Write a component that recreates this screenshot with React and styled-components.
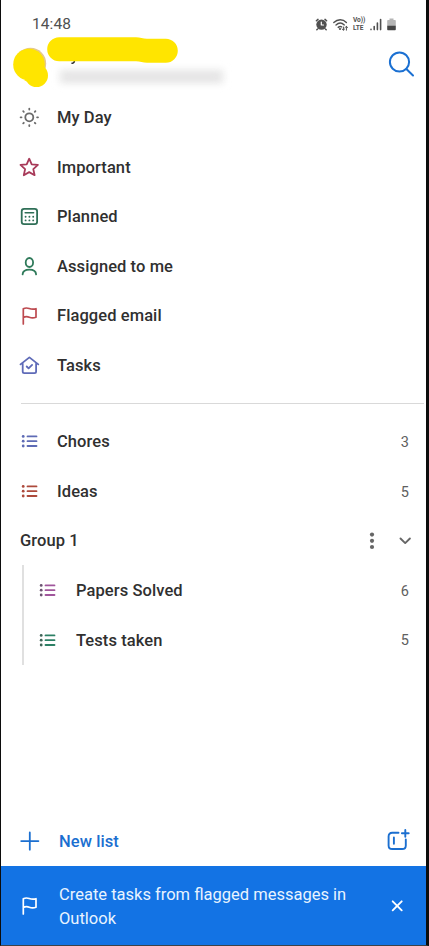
import React, { useState } from 'react';
import styled, { createGlobalStyle } from 'styled-components';

const GlobalStyle = createGlobalStyle`
  * { box-sizing: border-box; }
  body {
    margin: 0;
    background: #ffffff;
    font-family: Roboto, 'Liberation Sans', sans-serif;
  }
  p { margin: 0; }
`;

const smartLists = [
  { id: 'myday', name: 'My Day', color: '#6b6b6b' },
  { id: 'important', name: 'Important', color: '#a83a59' },
  { id: 'planned', name: 'Planned', color: '#2f6f57' },
  { id: 'assigned', name: 'Assigned to me', color: '#2f7a5a' },
  { id: 'flagged', name: 'Flagged email', color: '#bd4a50' },
  { id: 'tasks', name: 'Tasks', color: '#5f6bb8' },
];

const userLists = [
  { id: 1, name: 'Chores', color: '#5e6bb5', count: 3 },
  { id: 2, name: 'Ideas', color: '#ad4a3c', count: 5 },
];

const groupLists = [
  { id: 3, name: 'Papers Solved', color: '#a0569b', dot: '#6b5370', count: 6 },
  { id: 4, name: 'Tests taken', color: '#2d8065', dot: '#3f6457', count: 5 },
];

const Screen = styled.div`
  display: flex;
  flex-direction: column;
  width: 429px;
  height: 946px;
  background: #ffffff;
  border: solid #0c0c0c;
  border-width: 0 3px 1px 1px;
  border-bottom-color: #3d4248;
  overflow: hidden;
`;

const StatusBar = styled.div`
  display: flex;
  align-items: center;
  justify-content: space-between;
  height: 37px;
  padding: 11px 30px 0 31px;
  color: #505050;
`;

const Clock = styled.p`
  font-size: 15.5px;
  line-height: 26px;
  letter-spacing: 0.1px;
`;

const StatusIcons = styled.div`
  display: flex;
  align-items: center;
  gap: 5px;
`;

const VoLte = styled.div`
  display: grid;
  width: 12px;
  font-size: 6.6px;
  font-weight: 700;
  line-height: 8px;
  letter-spacing: -0.1px;
  white-space: nowrap;
`;

const Profile = styled.div`
  display: flex;
  justify-content: space-between;
  height: 55.5px;
  padding: 0 12px 0 11px;
`;

const Icon = styled.svg`
  display: block;
  flex: none;
  overflow: visible;
  fill: none;
  stroke: currentColor;
  stroke-width: ${(p) => p.$stroke || 1.5};
  stroke-linecap: round;
  stroke-linejoin: round;
`;

const SearchButton = styled.div`
  padding-top: 13px;
  color: #1b70d2;
`;

const Row = styled.div`
  display: flex;
  align-items: center;
  gap: ${(p) => (p.$nested ? 19 : 18)}px;
  height: 49.6px;
  padding: 0 17px 0 ${(p) => (p.$nested ? 13 : 18)}px;
`;

const IconBox = styled.span`
  flex: none;
  width: 20px;
  color: ${(p) => p.$color};
`;

const Label = styled.p`
  flex: 1;
  padding-top: 1.6px;
  font-size: 16.5px;
  font-weight: 500;
  line-height: 24px;
  letter-spacing: 0.08px;
  color: ${(p) => p.$color || '#303030'};
`;

const Count = styled.span`
  font-size: 14.5px;
  line-height: 20px;
  padding-top: 3.5px;
  color: #606060;
`;

const Divider = styled.div`
  flex: none;
  height: 1px;
  margin: 13px 2px 12.5px 20px;
  background: #d9d9d9;
`;

const GroupHeader = styled(Row)`
  gap: 23px;
  padding: 0 14px 0 19px;
  color: #666666;
`;

const GroupBody = styled.div`
  margin-left: 21px;
  border-left: 2px solid #e0e0e0;
`;

const Footer = styled(Row)`
  gap: 20px;
  padding-right: 16px;
  margin-top: auto;
  color: #1b6fd0;
`;

const Banner = styled.div`
  display: flex;
  align-items: center;
  gap: 20px;
  height: 79px;
  padding: 0 23px 0 18px;
  background: #1373e4;
  color: #ffffff;
`;

const BannerText = styled.p`
  flex: 1;
  padding-top: 2px;
  font-size: 16.5px;
  line-height: 23.5px;
  color: #e8f3ff;
`;

const FlagIcon = () => (
  <Icon width='20' height='20' viewBox='0 0 20 20' $stroke={1.7}>
    <path d='M4.300 17.900V2.800C6.200 1.800 8.300 1.800 10.200 2.500S14.400 3.500 17 2.700v8.500c-2.400.9-4.900.7-6.700 0S6.200 10.500 4.300 11.400' />
  </Icon>
);

const SmartIcon = ({ id }) => {
  if (id === 'flagged') return <FlagIcon />;
  return (
    <Icon width='20' height='20' viewBox='0 0 20 20' $stroke={1.8}>
      {id === 'myday' && (
        <>
          <circle cx='10.300' cy='10.300' r='4' />
          <path d='M10.300 1.600v.9M10.300 18.100v.9M1.600 10.300h.9M18.100 10.300h.9M4.200 4.200l.6.600M15.800 15.800l.6.600M4.200 16.400l.6-.6M15.800 4.800l.6-.6' />
        </>
      )}
      {id === 'important' && (
        <path d='M10.200 1.700l2.500 5.600 6.200.6-4.600 4.200 1.300 6.100-5.400-3.100-5.400 3.100 1.300-6.100L1.500 7.900l6.200-.6z' />
      )}
      {id === 'planned' && (
        <>
          <rect x='2.700' y='2.800' width='15.400' height='15.400' rx='2.400' />
          <path d='M6.200 6.700h8.400' strokeWidth='1.600' />
          <g fill='currentColor' stroke='none'>
            {[6.600, 10.400, 14.200].map((x) => (
              <React.Fragment key={x}>
                <circle cx={x} cy='10.700' r='0.950' />
                <circle cx={x} cy='14.400' r='0.950' />
              </React.Fragment>
            ))}
          </g>
        </>
      )}
      {id === 'assigned' && (
        <>
          <ellipse cx='10.400' cy='6.500' rx='3.700' ry='4.500' />
          <path d='M3.600 18.400c.2-3.300 2.400-4.700 6.800-4.700s6.500 1.400 6.700 4.700' />
        </>
      )}
      {id === 'tasks' && (
        <>
          <path d='M1.500 9.400l8.900-7 8.900 7M3.700 8.200v8.300c0 1 .6 1.600 1.600 1.600h10.200c1 0 1.600-.6 1.600-1.600V8.200' />
          <path d='M7.700 11.500l1.900 1.900 3.500-3.500' />
        </>
      )}
    </Icon>
  );
};

const ListIcon = ({ dot }) => (
  <Icon width='20' height='20' viewBox='0 0 20 20' $stroke={1.8}>
    {[5.400, 10.200, 15].map((y) => (
      <React.Fragment key={y}>
        <circle cx='4.200' cy={y} r='1.400' fill={dot || 'currentColor'} stroke='none' />
        <path d={`M8.500 ${y}h9`} />
      </React.Fragment>
    ))}
  </Icon>
);

const ListRow = ({ item, nested }) => (
  <Row $nested={nested}>
    <IconBox $color={item.color}><ListIcon dot={item.dot} /></IconBox>
    <Label>{item.name}</Label>
    <Count>{item.count}</Count>
  </Row>
);

const App = () => {
  const [groupOpen, setGroupOpen] = useState(true);
  const [bannerShown, setBannerShown] = useState(true);

  return (
    <>
      <GlobalStyle />
      <Screen>
        <StatusBar>
          <Clock>14:48</Clock>
          <StatusIcons>
            <Icon width='12' height='13' viewBox='0 0 12 13'>
              <circle cx='6.500' cy='6.600' r='5.200' fill='currentColor' stroke='none' />
              <path d='M1.400 2.800L3 1.400M10 1.400l1.600 1.400M2.600 11l-.8.800M10.400 11l.8.800' />
              <path d='M6.300 4v3h2.200' stroke='#ffffff' strokeWidth='1.200' />
            </Icon>
            <Icon width='16' height='13' viewBox='0 0 16 13' $stroke={1.4}>
              <path d='M1.800 4.500c3.800-3.600 9-3.600 12.600 0M4 7c2.600-2.400 5.800-2.400 8.300-.1M6.200 9.400c1.300-1.100 2.300-1.200 3.400-.5' />
              <circle cx='8' cy='11' r='1.100' fill='currentColor' stroke='none' />
              <path d='M11.400 9v3M10.200 11l1.200 1.200 1.200-1.200M14.400 12.200V8.400M13.200 9.500l1.200-1.200 1.200 1.200' strokeWidth='1' />
            </Icon>
            <VoLte>
              <span>Vo))</span>
              <span>LTE</span>
            </VoLte>
            <Icon width='12' height='13' viewBox='0 0 12 13' $stroke={1.6}>
              <path d='M1 11.400v.2M4.200 8.500v3.100M7.400 5v6.600M10.600 1.600v10' />
            </Icon>
            <Icon width='9' height='13' viewBox='0 0 9 13'>
              <path d='M2.500.5h4v1.600h1.300c.6 0 1 .4 1 1V8H.2V3.100c0-.6.4-1 1-1h1.300z' fill='#b5b5b5' stroke='none' />
              <path d='M.2 7.800h8.600v3.400c0 .6-.4 1-1 1H1.200c-.6 0-1-.4-1-1z' fill='#454545' stroke='none' />
            </Icon>
          </StatusIcons>
        </StatusBar>

        <Profile>
          <svg width='220' height='55' viewBox='12 37 220 55' overflow='visible'>
            <defs>
              <filter id='soft' x='-10%' y='-100%' width='120%' height='300%'>
                <feGaussianBlur stdDeviation='3.5' />
              </filter>
            </defs>
            <circle cx='30.500' cy='63.500' r='15.700' fill='#e5c88c' />
            <circle cx='29' cy='64.500' r='15.800' fill='#ffe500' />
            <circle cx='36.500' cy='75.500' r='11.500' fill='#ffe500' />
            <path d='M25 79l4 2' stroke='#ffe500' strokeWidth='3' />
            <rect x='59' y='69' width='165' height='15' rx='3' fill='#ececec' filter='url(#soft)' />
            <rect x='64' y='74' width='155' height='6' fill='#dad8da' filter='url(#soft)' opacity='0.500' />
            <path d='M71.500 63c1.500.6 2.500 0 3-2' fill='none' stroke='#2c2c2c' strokeWidth='1.500' />
            <path d='M59.200 37.300H136c4 0 7 1.500 11 1.500h18.800a12 12 0 0 1 0 24H147c-4 0-7-1.500-11-1.500H59.200a12 12 0 0 1 0-24z' fill='#ffe500' />
          </svg>
          <SearchButton>
            <Icon width='27' height='27' viewBox='0 0 27 27' $stroke={2}>
              <circle cx='12.500' cy='12' r='9.600' />
              <path d='M19.400 19l6.600 6.500' />
            </Icon>
          </SearchButton>
        </Profile>

        {smartLists.map((item) => (
          <Row key={item.id}>
            <IconBox $color={item.color}><SmartIcon id={item.id} /></IconBox>
            <Label>{item.name}</Label>
          </Row>
        ))}

        <Divider />

        {userLists.map((item) => <ListRow key={item.id} item={item} />)}

        <GroupHeader onClick={() => setGroupOpen(!groupOpen)}>
          <Label>Group 1</Label>
          <Icon width='6' height='18' viewBox='0 0 6 18'>
            <g fill='currentColor' stroke='none'>
              <circle cx='3' cy='2.600' r='2.100' />
              <circle cx='3' cy='8.800' r='2.100' />
              <circle cx='3' cy='15' r='2.100' />
            </g>
          </Icon>
          <Icon width='14' height='14' viewBox='0 0 14 14' $stroke={1.9}>
            <path d='M2.500 4.500L7.200 9.100l4.700-4.600' />
          </Icon>
        </GroupHeader>
        {groupOpen && (
          <GroupBody>
            {groupLists.map((item) => <ListRow key={item.id} item={item} nested />)}
          </GroupBody>
        )}

        <Footer>
          <Icon width='20' height='20' viewBox='0 0 20 20' $stroke={1.8}>
            <path d='M10.800 1.500v17.200M2.200 10.100h17.200' />
          </Icon>
          <Label $color='#1b6fd0'>New list</Label>
          <Icon width='24' height='24' viewBox='0 0 24 24' $stroke={1.9}>
            <path d='M12.500 3.800H6.200c-2.200 0-3.600 1.400-3.600 3.600v9c0 2.200 1.400 3.600 3.600 3.600h10c2.200 0 3.600-1.400 3.600-3.600v-6' />
            <path d='M7.900 8.500v6.300M19.300 .9v6.800M15.900 4.300h6.800' />
          </Icon>
        </Footer>

        {bannerShown && (
          <Banner>
            <FlagIcon />
            <BannerText>Create tasks from flagged messages in Outlook</BannerText>
            <Icon width='12' height='12' viewBox='0 0 12 12' $stroke={1.9} onClick={() => setBannerShown(false)}>
              <path d='M1.700 1.300l9 9M10.700 1.300l-9 9' />
            </Icon>
          </Banner>
        )}
      </Screen>
    </>
  );
};

export default App;
